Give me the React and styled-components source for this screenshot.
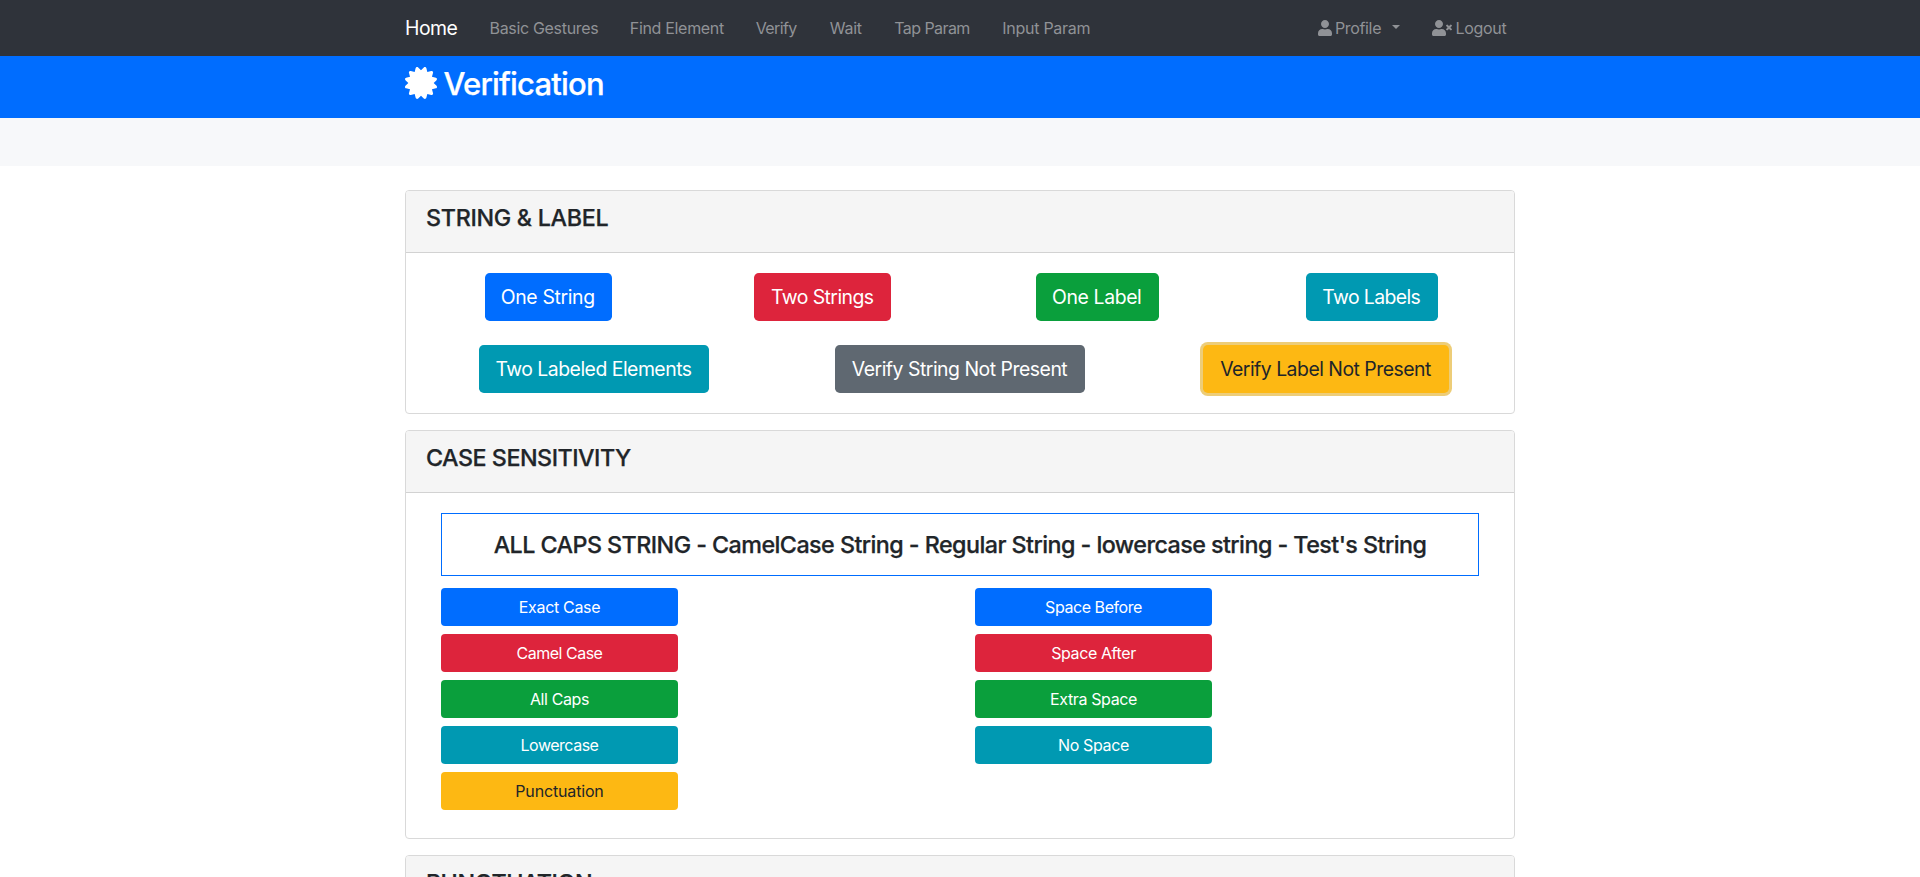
import React from 'react';
import styled, { createGlobalStyle } from 'styled-components';
import { FaCertificate, FaUser, FaUserTimes } from 'react-icons/fa';

const GlobalStyle = createGlobalStyle`
  *, *::before, *::after { box-sizing: border-box; }
  html { overflow: hidden; }
  body {
    margin: 0;
    height: 877px;
    overflow: hidden;
    background: #fff;
    color: #212529;
    font-family: Inter, "Liberation Sans", sans-serif;
    font-size: 16px;
    line-height: 24px;
  }
  h1, h3, h4 { margin: 0; font-weight: 500; -webkit-text-stroke: 0.25px currentColor; }
`;

const tones = {
  primary: { bg: '#006dff', fg: '#fff' },
  danger: { bg: '#dd243c', fg: '#fff' },
  success: { bg: '#0a9f3c', fg: '#fff' },
  info: { bg: '#0099b2', fg: '#fff' },
  secondary: { bg: '#5f6871', fg: '#fff' },
  warning: { bg: '#fdb813', fg: '#212529' },
};

const Container = styled.div`
  width: 1140px;
  margin: 0 auto;
  padding: 0 15px;
`;

const Navbar = styled.nav`
  height: 56px;
  background: #2f333a;
`;

const NavInner = styled(Container)`
  display: flex;
  align-items: center;
  height: 100%;
  padding-right: 23px;
`;

const Brand = styled.a`
  width: 52px;
  margin-right: 32.5px;
  color: #fff;
  font-size: 19.4px;
  letter-spacing: -0.5px;
  white-space: nowrap;
`;

const NavList = styled.div`
  display: flex;
  gap: 32px;
`;

const UserNav = styled(NavList)`
  margin-left: auto;
`;

const NavLink = styled.a`
  width: ${(p) => p.$w}px;
  display: flex;
  align-items: center;
  color: #909296;
  letter-spacing: ${(p) => p.$track || 0}px;
  white-space: nowrap;

  svg {
    flex: none;
    width: ${(p) => p.$icon}px;
    height: 16px;
    margin-right: 3.5px;
  }
`;

const Caret = styled.span`
  margin: -2px 0 0 auto;
  border: 4.8px solid transparent;
  border-top-color: currentColor;
  border-bottom: 0;
`;

const Hero = styled.header`
  height: 62px;
  padding-top: 8px;
  background: #006dff;
  color: #fff;
`;

const Title = styled.h1`
  display: flex;
  align-items: center;
  gap: 6.5px;
  font-size: 31px;
  line-height: 40px;
  letter-spacing: -0.8px;

  svg { margin-top: -2px; stroke: none; }
`;

const Band = styled.div`
  height: 48px;
  background: #f7f8fa;
`;

const Main = styled(Container)`
  display: flex;
  flex-direction: column;
  gap: 16px;
  padding-top: 24px;
`;

const Card = styled.section`
  border: 1px solid #d9d9d9;
  border-radius: 4px;
  overflow: hidden;
`;

const CardHeader = styled.div`
  height: 62px;
  padding: 12px 20px;
  background: #f5f5f5;
  border-bottom: 1px solid #d2d2d2;
`;

const CardTitle = styled.h3`
  font-size: 23.3px;
  line-height: 30px;
  letter-spacing: ${(p) => p.$track}px;
`;

const ButtonRows = styled.div`
  display: flex;
  flex-direction: column;
  gap: 24px;
  padding: 20px 5px;
`;

const ButtonRow = styled.div`
  display: grid;
  grid-template-columns: repeat(${(p) => p.$cols}, 1fr);
  justify-items: center;
`;

const Button = styled.button`
  height: 38px;
  padding: 0;
  border: 0;
  border-radius: 4px;
  background: ${(p) => tones[p.$tone].bg};
  color: ${(p) => tones[p.$tone].fg};
  font: inherit;
  letter-spacing: ${(p) => p.$track || 0}px;
  white-space: nowrap;
`;

const LargeButton = styled(Button)`
  width: ${(p) => p.$w}px;
  height: 48px;
  padding-right: 1px;
  border-radius: 4.8px;
  font-size: 19.4px;
  box-shadow: ${(p) => (p.$focused ? '0 0 0 3px #edcd78' : 'none')};
`;

const CaseBody = styled.div`
  padding: 20px 35px 28px;
`;

const Sample = styled.h4`
  height: 63px;
  border: 1px solid #006dff;
  margin: 0 0 12px;
  text-align: center;
  font-size: 23.3px;
  line-height: 61px;
  letter-spacing: -0.55px;
  white-space: nowrap;
`;

const CaseColumns = styled.div`
  display: grid;
  grid-template-columns: 237px 237px;
  column-gap: 297px;
  align-items: start;
`;

const Stack = styled.div`
  display: grid;
  gap: 8px;
`;

const links = [
  ['Basic Gestures', 108.3, -0.32],
  ['Find Element', 94, -0.32],
  ['Verify', 42, -0.65],
  ['Wait', 32.5, -0.3],
  ['Tap Param', 76, -0.58],
  ['Input Param', 88, -0.27],
];

const stringButtons = [
  ['One String', 'primary', 127, -0.34],
  ['Two Strings', 'danger', 137, -0.55],
  ['One Label', 'success', 123, -0.38],
  ['Two Labels', 'info', 132, -0.6],
];

const presenceButtons = [
  ['Two Labeled Elements', 'info', 230, -0.5],
  ['Verify String Not Present', 'secondary', 250, -0.48],
  ['Verify Label Not Present', 'warning', 246, -0.5, true],
];

const caseButtons = [
  ['Exact Case', 'primary', -0.32],
  ['Camel Case', 'danger', -0.5],
  ['All Caps', 'success', -0.4],
  ['Lowercase', 'info', -0.49],
  ['Punctuation', 'warning', -0.16],
];

const spaceButtons = [
  ['Space Before', 'primary', -0.44],
  ['Space After', 'danger', -0.4],
  ['Extra Space', 'success', -0.36],
  ['No Space', 'info', -0.38],
];

const LargeRow = ({ items }) => (
  <ButtonRow $cols={items.length}>
    {items.map(([label, tone, w, track, focused]) => (
      <LargeButton key={label} $tone={tone} $w={w} $track={track} $focused={focused}>
        {label}
      </LargeButton>
    ))}
  </ButtonRow>
);

const ButtonStack = ({ items }) => (
  <Stack>
    {items.map(([label, tone, track]) => (
      <Button key={label} $tone={tone} $track={track}>{label}</Button>
    ))}
  </Stack>
);

export default function App() {
  return (
    <>
      <GlobalStyle />
      <Navbar>
        <NavInner>
          <Brand>Home</Brand>
          <NavList>
            {links.map(([label, w, track]) => (
              <NavLink key={label} $w={w} $track={track}>{label}</NavLink>
            ))}
          </NavList>
          <UserNav>
            <NavLink $w={82.5} $icon={14} $track={-0.35}>
              <FaUser />
              Profile
              <Caret />
            </NavLink>
            <NavLink $w={75} $icon={20} $track={-0.3}>
              <FaUserTimes />
              Logout
            </NavLink>
          </UserNav>
        </NavInner>
      </Navbar>
      <Hero>
        <Container>
          <Title>
            <FaCertificate size={32} />
            Verification
          </Title>
        </Container>
      </Hero>
      <Band />
      <Main>
        <Card>
          <CardHeader><CardTitle $track={-0.3}>STRING &amp; LABEL</CardTitle></CardHeader>
          <ButtonRows>
            <LargeRow items={stringButtons} />
            <LargeRow items={presenceButtons} />
          </ButtonRows>
        </Card>
        <Card>
          <CardHeader><CardTitle $track={-0.49}>CASE SENSITIVITY</CardTitle></CardHeader>
          <CaseBody>
            <Sample>ALL CAPS STRING - CamelCase String - Regular String - lowercase string - Test's String</Sample>
            <CaseColumns>
              <ButtonStack items={caseButtons} />
              <ButtonStack items={spaceButtons} />
            </CaseColumns>
          </CaseBody>
        </Card>
        <Card>
          <CardHeader><CardTitle $track={-0.38}>PUNCTUATION</CardTitle></CardHeader>
        </Card>
      </Main>
    </>
  );
}
